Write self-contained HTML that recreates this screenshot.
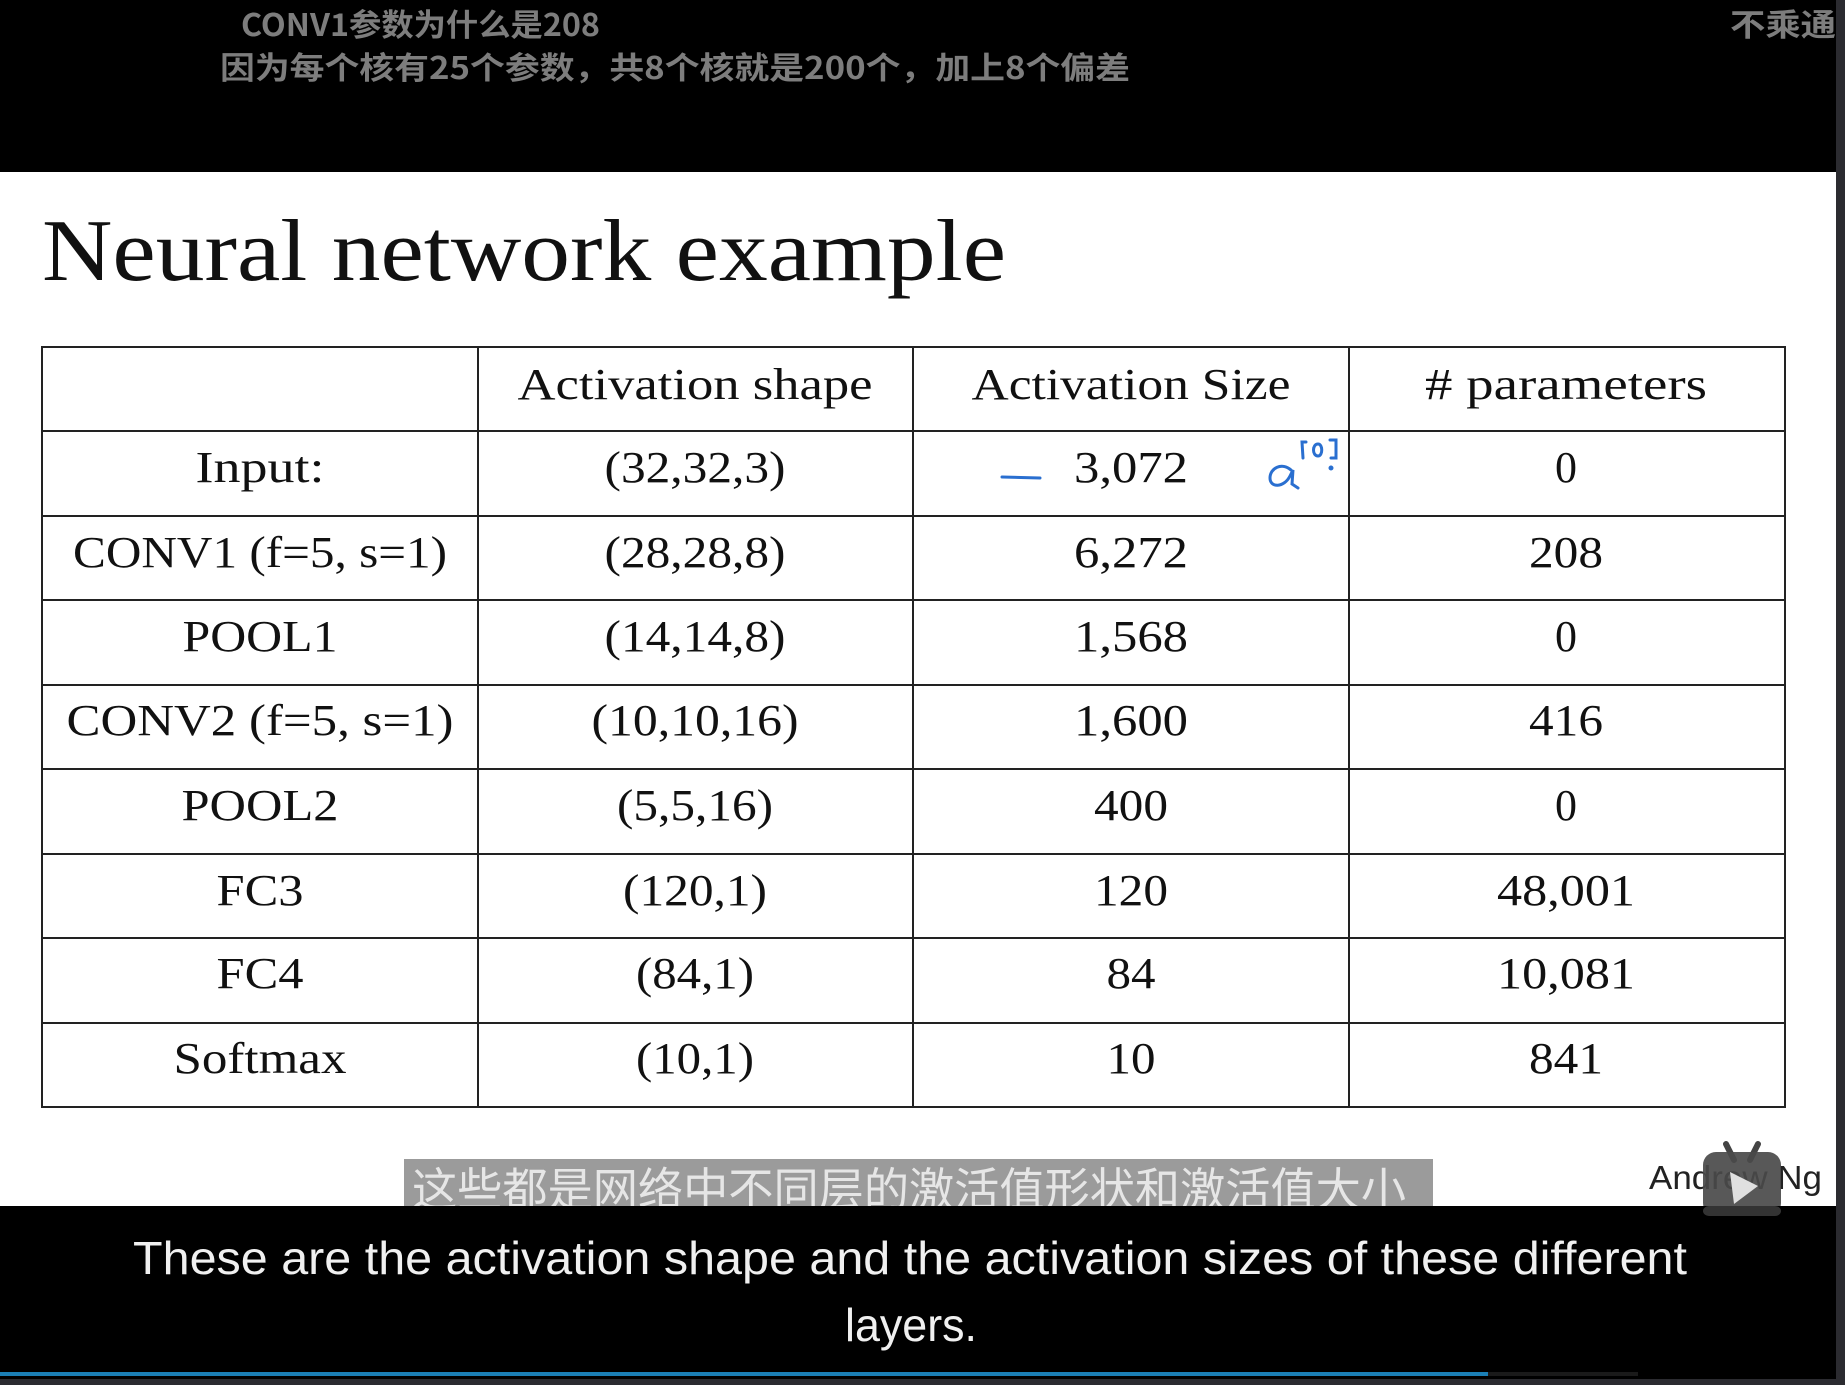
<!DOCTYPE html>
<html><head><meta charset="utf-8"><style>
html,body{margin:0;padding:0;background:#000;width:1845px;height:1385px;overflow:hidden}
svg{display:block}
.t{font-family:"Liberation Serif",serif;font-size:44px;fill:#111}
</style></head><body>
<svg width="1845" height="1385" viewBox="0 0 1845 1385" xmlns="http://www.w3.org/2000/svg">
<rect x="0" y="0" width="1845" height="1385" fill="#000"/>
<rect x="0" y="172" width="1836" height="1034" fill="#fff"/>
<rect x="1836" y="0" width="9" height="1385" fill="#2b2b30"/>
<g font-family="'Noto Sans CJK SC',sans-serif" font-weight="bold" fill="#7d7d7d" font-size="31">
<text x="241" y="36" textLength="359" lengthAdjust="spacingAndGlyphs">CONV1参数为什么是208</text>
<text x="220" y="79" textLength="910" lengthAdjust="spacingAndGlyphs">因为每个核有25个参数，共8个核就是200个，加上8个偏差</text>
<text x="1730" y="36" textLength="106" lengthAdjust="spacingAndGlyphs">不乘通</text>
</g>
<text x="42" y="280" font-family="'Liberation Serif',serif" font-size="88" fill="#111" textLength="964" lengthAdjust="spacingAndGlyphs">Neural network example</text>
<g stroke="#222" stroke-width="2" fill="none">
<rect x="42" y="347" width="1743" height="760"/>
<line x1="478" y1="347" x2="478" y2="1107"/><line x1="913" y1="347" x2="913" y2="1107"/><line x1="1349" y1="347" x2="1349" y2="1107"/>
<line x1="42" y1="431" x2="1785" y2="431"/><line x1="42" y1="516" x2="1785" y2="516"/><line x1="42" y1="600" x2="1785" y2="600"/><line x1="42" y1="685" x2="1785" y2="685"/><line x1="42" y1="769" x2="1785" y2="769"/><line x1="42" y1="854" x2="1785" y2="854"/><line x1="42" y1="938" x2="1785" y2="938"/><line x1="42" y1="1023" x2="1785" y2="1023"/>
</g>
<g class="t" text-anchor="middle">
<text x="695" y="399" textLength="355" lengthAdjust="spacingAndGlyphs">Activation shape</text>
<text x="1131" y="399" textLength="319" lengthAdjust="spacingAndGlyphs">Activation Size</text>
<text x="1566" y="399" textLength="282" lengthAdjust="spacingAndGlyphs"># parameters</text>

<text x="260" y="482" textLength="129" lengthAdjust="spacingAndGlyphs">Input:</text>
<text x="260" y="567" textLength="374" lengthAdjust="spacingAndGlyphs">CONV1 (f=5, s=1)</text>
<text x="260" y="651" textLength="155" lengthAdjust="spacingAndGlyphs">POOL1</text>
<text x="260" y="735" textLength="387" lengthAdjust="spacingAndGlyphs">CONV2  (f=5, s=1)</text>
<text x="260" y="820" textLength="157" lengthAdjust="spacingAndGlyphs">POOL2</text>
<text x="260" y="905" textLength="87" lengthAdjust="spacingAndGlyphs">FC3</text>
<text x="260" y="988" textLength="87" lengthAdjust="spacingAndGlyphs">FC4</text>
<text x="260" y="1073" textLength="173" lengthAdjust="spacingAndGlyphs">Softmax</text>

<text x="695" y="482" textLength="181" lengthAdjust="spacingAndGlyphs">(32,32,3)</text>
<text x="695" y="567" textLength="181" lengthAdjust="spacingAndGlyphs">(28,28,8)</text>
<text x="695" y="651" textLength="181" lengthAdjust="spacingAndGlyphs">(14,14,8)</text>
<text x="695" y="735" textLength="207" lengthAdjust="spacingAndGlyphs">(10,10,16)</text>
<text x="695" y="820" textLength="156" lengthAdjust="spacingAndGlyphs">(5,5,16)</text>
<text x="695" y="905" textLength="144" lengthAdjust="spacingAndGlyphs">(120,1)</text>
<text x="695" y="988" textLength="118" lengthAdjust="spacingAndGlyphs">(84,1)</text>
<text x="695" y="1073" textLength="118" lengthAdjust="spacingAndGlyphs">(10,1)</text>

<text x="1131" y="482" textLength="114" lengthAdjust="spacingAndGlyphs">3,072</text>
<text x="1131" y="567" textLength="114" lengthAdjust="spacingAndGlyphs">6,272</text>
<text x="1131" y="651" textLength="114" lengthAdjust="spacingAndGlyphs">1,568</text>
<text x="1131" y="735" textLength="114" lengthAdjust="spacingAndGlyphs">1,600</text>
<text x="1131" y="820" textLength="74" lengthAdjust="spacingAndGlyphs">400</text>
<text x="1131" y="905" textLength="74" lengthAdjust="spacingAndGlyphs">120</text>
<text x="1131" y="988" textLength="49" lengthAdjust="spacingAndGlyphs">84</text>
<text x="1131" y="1073" textLength="49" lengthAdjust="spacingAndGlyphs">10</text>

<text x="1566" y="482">0</text>
<text x="1566" y="567" textLength="74" lengthAdjust="spacingAndGlyphs">208</text>
<text x="1566" y="651">0</text>
<text x="1566" y="735" textLength="74" lengthAdjust="spacingAndGlyphs">416</text>
<text x="1566" y="820">0</text>
<text x="1566" y="905" textLength="138" lengthAdjust="spacingAndGlyphs">48,001</text>
<text x="1566" y="988" textLength="138" lengthAdjust="spacingAndGlyphs">10,081</text>
<text x="1566" y="1073" textLength="74" lengthAdjust="spacingAndGlyphs">841</text>
</g>
<g stroke="#2a6fd0" stroke-width="3" fill="none" stroke-linecap="round">
<path d="M1002 477 L1040 478"/>
<path d="M1291 470 C1282 462 1270 468 1270 478 C1270 488 1284 488 1290 476 L1293 470 L1292 484 L1298 488"/>
<path d="M1306 442 L1302 442 L1303 458 M1318 444 C1312 444 1312 456 1318 456 C1323 456 1323 444 1318 444 M1330 440 L1336 440 L1336 458 L1331 458"/>
<circle cx="1331" cy="468" r="1" fill="#2a6fd0"/>
</g>
<rect x="404" y="1159" width="1029" height="47" fill="#9b9b9b"/>
<text x="412" y="1206" font-family="'Noto Sans CJK SC',sans-serif" font-size="46" fill="#e6e6e6" textLength="994" lengthAdjust="spacingAndGlyphs">这些都是网络中不同层的激活值形状和激活值大小</text>
<text x="1649" y="1189" font-family="'Liberation Sans',sans-serif" font-size="33" fill="#222" textLength="173" lengthAdjust="spacingAndGlyphs">Andrew Ng</text>
<g>
<path d="M1726 1144 L1734 1160 M1758 1144 L1750 1160" stroke="#444" stroke-width="6" stroke-linecap="round"/>
<rect x="1703" y="1152" width="78" height="64" rx="13" fill="#4a4a4a" fill-opacity="0.92"/>
<path d="M1730 1172 L1758 1186 L1734 1204 Z" fill="#e0e0e0"/>
</g>
<rect x="0" y="1206" width="1836" height="170" fill="#000"/>
<rect x="1703" y="1206" width="78" height="10" rx="6" fill="#333"/>
<g font-family="'Liberation Sans',sans-serif" font-size="46" fill="#f0f0f0" text-anchor="middle">
<text x="910" y="1274" textLength="1554" lengthAdjust="spacingAndGlyphs">These are the activation shape and the activation sizes of these different</text>
<text x="911" y="1341" textLength="132" lengthAdjust="spacingAndGlyphs">layers.</text>
</g>
<rect x="0" y="1372" width="1488" height="4" fill="#1b7fb6"/>
<rect x="1488" y="1372" width="150" height="4" fill="#1a1a1a"/>
<rect x="0" y="1379" width="1845" height="6" fill="#2b2b30"/>
</svg>
</body></html>
